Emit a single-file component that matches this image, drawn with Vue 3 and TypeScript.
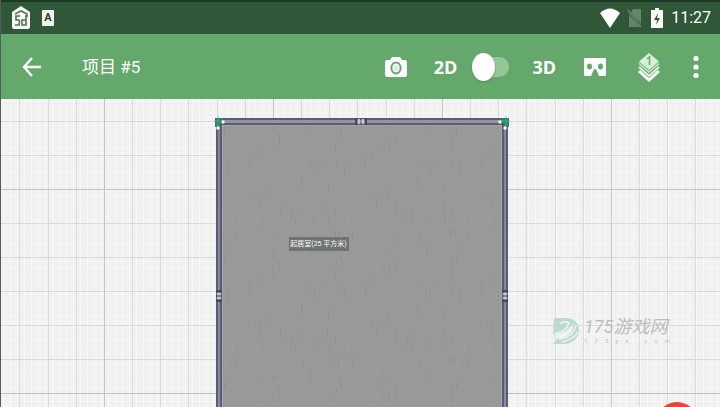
<script setup lang="ts">
import { ref } from 'vue'

const is3D = ref(false)
const site = '175yx.com'.split('')

interface Scratch { x: number; y: number; h: number; dark: boolean }

// Repeatable scratches for the carpet tile
const scratches: Scratch[] = []
let seed = 17
const next = (limit: number): number => {
  seed = (seed * 1103515245 + 12345) % 2147483648
  return Math.floor((seed / 2147483648) * limit)
}
for (let i = 0; i < 44; i++) {
  scratches.push({ x: next(116), y: next(126), h: 3 + next(9), dark: next(3) > 0 })
}
</script>

<template>
  <div class="app">
    <div class="status">
      <svg class="home" viewBox="0 0 20 24" aria-hidden="true">
        <path d="M10 0L19 6V21Q19 23 17 23H3Q1 23 1 21V6Z" fill="#f4faf3" />
        <path d="M4 8L10 5L16 8V11M9 10H5V14H8Q9 15 8 19H4M15 9V19H11V14H15" fill="none" stroke="#52705a" stroke-width="1.6" />
      </svg>
      <span class="badge">A</span>
      <div class="system">
        <svg class="wifi" viewBox="0 0 20 20" aria-hidden="true"><path d="M0 5Q10-4 20 5L10 20Z" fill="#fff" /></svg>
        <svg class="sim" viewBox="0 0 16 20" aria-hidden="true">
          <path d="M6 1H14V16L4 5ZM2 6L13 19H2Z" fill="#66836b" />
          <path d="M1 2L14 19" stroke="#66836b" stroke-width="1.6" />
        </svg>
        <svg class="battery" viewBox="0 0 12 20" aria-hidden="true">
          <path d="M4 0H8V2H12V20H0V2H4Z" fill="#fff" />
          <path d="M7 5L3 12H6L5 17L9 10H6Z" fill="#2f5737" />
        </svg>
        <time>11:27</time>
      </div>
    </div>

    <header class="bar">
      <button class="back" aria-label="返回">
        <svg viewBox="0 0 20 22" aria-hidden="true"><path d="M10 2L2 11L10 20M2 11H19" fill="none" stroke="#fff" stroke-width="2.3" /></svg>
      </button>
      <h1>项目 #5</h1>
      <div class="tools">
        <button class="tool" aria-label="拍照">
          <svg viewBox="0 0 24 22" aria-hidden="true">
            <path d="M8 1H16L18 4H21Q23 4 23 7V18Q23 21 21 21H3Q1 21 1 18V7Q1 4 3 4H6Z" fill="#fff" />
            <ellipse cx="12" cy="12" rx="4.6" ry="5.4" fill="#fff" stroke="#65a86c" stroke-width="2" />
            <ellipse cx="12" cy="12" rx="2.5" ry="3" fill="#d9edd5" />
          </svg>
        </button>
        <label class="mode">
          <span>2D</span>
          <input v-model="is3D" type="checkbox" role="switch" aria-label="2D 3D" />
          <span>3D</span>
        </label>
        <button class="tool" aria-label="VR">
          <svg viewBox="0 0 24 22" aria-hidden="true">
            <path d="M2 2H22Q23 2 23 3V19Q23 20 22 20H16L13.5 14Q12 12 10.5 14L8 20H2Q1 20 1 19V3Q1 2 2 2Z" fill="#fff" />
            <ellipse cx="6.5" cy="10.5" rx="2.5" ry="3" fill="#65a86c" />
            <ellipse cx="17.5" cy="10.5" rx="2.5" ry="3" fill="#65a86c" />
          </svg>
        </button>
        <button class="tool layers" aria-label="楼层">
          <svg viewBox="0 0 24 30" aria-hidden="true">
            <path d="M2 19L12 28L22 19" fill="none" stroke="#fff" stroke-width="3" />
            <path d="M2 15L12 24L22 15" fill="none" stroke="#e2f2df" stroke-width="2" />
            <path d="M2 11.5L12 20L22 11.5" fill="none" stroke="#d1e9cf" stroke-width="1.5" />
            <path d="M12 1L22 9.500L12 18L2 9.500Z" fill="#d9eed7" />
            <path d="M10 7L12.5 5V13" fill="none" stroke="#72a976" stroke-width="1.6" />
          </svg>
        </button>
        <button class="more" aria-label="更多">
          <svg viewBox="0 0 6 24" aria-hidden="true">
            <g fill="#fff"><circle cx="3" cy="3.5" r="2.6" /><circle cx="3" cy="12" r="2.6" /><circle cx="3" cy="20.5" r="2.6" /></g>
          </svg>
        </button>
      </div>
    </header>

    <main class="plan">
      <svg class="room" viewBox="0 0 296 410" aria-hidden="true">
        <defs>
          <pattern id="carpet" width="116" height="126" patternUnits="userSpaceOnUse">
            <rect width="116" height="126" fill="#979a98" />
            <rect v-for="(s, i) in scratches" :key="i" :x="s.x" :y="s.y" width="1" :height="s.h" :fill="s.dark ? '#8a8d8b' : '#a1a4a2'" opacity="0.6" />
          </pattern>
          <linearGradient id="side" x2="0" y2="1">
            <stop offset="0" stop-color="#84829a" />
            <stop offset="1" stop-color="#8793a4" />
          </linearGradient>
        </defs>
        <rect x="2" y="2" width="292" height="408" fill="#5b5c70" />
        <rect x="8" y="9" width="280" height="401" fill="url(#carpet)" />
        <path d="M8.500 410V9.500H287.500V410" fill="none" stroke="#a5a6a8" stroke-width="1" />
        <rect x="4" y="4" width="288" height="3" fill="#94969b" />
        <rect x="4" y="7" width="2" height="403" fill="url(#side)" />
        <rect x="290" y="7" width="2" height="403" fill="url(#side)" />
        <path d="M142 2V9M152 2V9M2 175H8M2 185H8M288 175H294M288 185H294" stroke="#474958" stroke-width="2" />
        <path d="M145 3V8M149 3V8M3 178H7M3 182H7M289 178H293M289 182H293" stroke="#c4c7cd" stroke-width="2" />
        <path d="M1 2H9V7H6V11H1ZM287 2H295V11H290V7H287Z" fill="#29846c" />
        <path d="M4 0V14M0 5H12M292 0V14M284 5H296" stroke="#65b99c" stroke-width="1" opacity="0.6" />
        <g fill="#f4fffa"><circle cx="9" cy="6" r="1.7" /><circle cx="4" cy="12" r="1.7" /><circle cx="286" cy="6" r="1.7" /><circle cx="291" cy="12" r="1.7" /></g>
      </svg>
      <span class="area">起居室(25 平方米)</span>

      <div class="watermark">
        <svg viewBox="0 0 28 28" aria-hidden="true">
          <path d="M2 1H14C32 2 31 24 14 27H1L5 22C18 20 23 12 21 6C17 13 11 17 1 18Z" fill="#bcd9d4" />
          <path d="M2 17Q14 15 17 6Q11 3 8 7M7 22Q22 20 24 8M10 25Q22 22 26 15" fill="none" stroke="#f1f4f3" stroke-width="1.5" />
        </svg>
        <div class="brand">
          <strong>175游戏网</strong>
          <div class="site"><span v-for="(c, i) in site" :key="i">{{ c }}</span></div>
        </div>
      </div>
      <button class="add" aria-label="添加"></button>
    </main>
  </div>
</template>

<style>
body { margin: 0; }
</style>

<style scoped>
.app {
  display: flex;
  flex-direction: column;
  height: 100vh;
  overflow: hidden;
  box-sizing: border-box;
  border-left: 1px solid #50605a;
  font-family: Roboto, "Noto Sans CJK SC", sans-serif;
  color: #fff;
}
svg { display: block; }
button { padding: 0; border: 0; background: none; }
.status {
  display: flex;
  flex: none;
  align-items: center;
  height: 34px;
  padding: 0 9px 0 10px;
  box-sizing: border-box;
  border-top: 2px solid #1c3822;
  background: #305738;
}
.home { width: 20px; height: 24px; }
.badge {
  margin-left: 11px;
  width: 12px;
  height: 16px;
  border-radius: 1px;
  background: #eef5ec;
  color: #28402d;
  font-size: 11px;
  line-height: 16px;
  font-weight: 700;
  text-align: center;
}
.system { display: flex; align-items: center; margin-left: auto; }
.wifi { width: 20px; height: 20px; }
.sim { width: 16px; height: 20px; margin-left: 7px; }
.battery { width: 12px; height: 20px; margin-left: 8px; }
time { margin-left: 8px; font-size: 16px; line-height: 20px; }
.bar {
  display: flex;
  flex: none;
  align-items: center;
  height: 65px;
  padding: 0 21px;
  box-sizing: border-box;
  background: #65a86c;
}
.back svg { width: 20px; height: 22px; }
h1 { margin: 0 0 0 40px; font-size: 17px; line-height: 24px; font-weight: 400; }
.tools { display: flex; align-items: center; gap: 26px; margin-left: auto; }
.tool svg { width: 24px; height: 22px; }
.tool.layers { margin-left: 4px; }
.tool.layers svg { height: 30px; }
.more { margin-left: 6px; }
.more svg { width: 6px; height: 24px; }
.mode {
  display: flex;
  align-items: center;
  gap: 15px;
  margin-right: 1px;
  font-family: "Open Sans", "Noto Sans", sans-serif;
  font-size: 18px;
  line-height: 24px;
  font-weight: 700;
}
.mode span:last-child { margin-left: 8px; }
.mode input {
  display: flex;
  align-items: center;
  appearance: none;
  width: 37px;
  height: 20px;
  margin: 0;
  border-radius: 10px;
  background: #95c698;
}
.mode input::before {
  content: "";
  width: 23px;
  height: 28px;
  flex: none;
  border-radius: 50%;
  background: #fff;
  box-shadow: 0 1px 2px #4f8b58;
}
.mode input:checked { justify-content: flex-end; }
.plan {
  position: relative;
  flex: 1;
  min-height: 0;
  overflow: hidden;
  background-color: #f2f2f3;
  background-image:
    linear-gradient(90deg, #c6c6c9 1px, transparent 1px),
    linear-gradient(#c2c2c5 1px, transparent 1px),
    linear-gradient(90deg, transparent 28px, #dbdbdd 28px 29px, transparent 29px 56px, #dbdbdd 56px 57px, transparent 57px 84px, #dbdbdd 84px 85px, transparent 85px 113px, #dbdbdd 113px 114px, transparent 114px 141px, #dbdbdd 141px 142px, transparent 142px),
    linear-gradient(#dadadc 1px, transparent 1px),
    linear-gradient(90deg, #f8f8f8 1px, transparent 1px),
    linear-gradient(#eeeeef 1px, transparent 1px);
  background-size: 169px 100%, 100% 204px, 169px 100%, 100% 34px, 7px 100%, 100% 6px;
  background-position: 103px 0, 0 90px, 103px 0, 0 22px, 2px 0, 0 4px;
}
.room {
  position: absolute;
  top: 17px;
  left: calc(50% - 147px);
  width: 296px;
}
.area {
  position: absolute;
  top: 138px;
  left: calc(50% - 72px);
  width: 60px;
  height: 14px;
  background: #6f7371;
  color: #fff;
  font-size: 7px;
  line-height: 14px;
  text-align: center;
  white-space: nowrap;
}
.watermark {
  position: absolute;
  top: 218px;
  right: 50px;
  display: flex;
  gap: 4px;
  color: #bcbec0;
}
.watermark svg { width: 28px; height: 28px; }
.brand { width: 86px; }
.brand strong {
  display: block;
  font-size: 18px;
  line-height: 20px;
  font-style: italic;
  font-weight: 400;
  white-space: nowrap;
}
.site { display: flex; justify-content: space-between; font-size: 6px; line-height: 8px; }
.add {
  position: absolute;
  right: 19px;
  bottom: -51px;
  width: 48px;
  height: 56px;
  border-radius: 50%;
  background: #e5453b;
}
</style>
